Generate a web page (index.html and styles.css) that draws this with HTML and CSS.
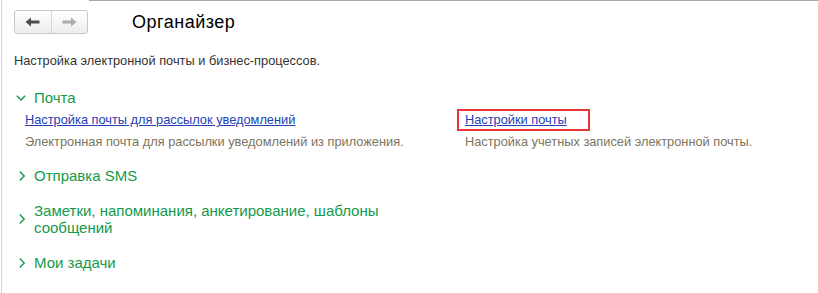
FILE: index.html
```html
<!DOCTYPE html>
<html lang="ru">
<head>
<meta charset="utf-8">
<link rel="stylesheet" href="styles.css">
</head>
<body>
<div class="frame">
  <header class="header">
    <div class="nav">
      <button class="nav-btn"><svg width="15" height="10" viewBox="0 0 15 10"><path d="M0.5 5 L6 0.5 V3.5 H14.5 V6.5 H6 V9.5 Z" fill="#4d4d4d"/></svg></button>
      <button class="nav-btn"><svg width="15" height="10" viewBox="0 0 15 10"><path d="M14.5 5 L9 0.5 V3.5 H0.5 V6.5 H9 V9.5 Z" fill="#ababab"/></svg></button>
    </div>
    <h1 class="title">Органайзер</h1>
  </header>
  <p class="intro">Настройка электронной почты и бизнес-процессов.</p>

  <section class="group open">
    <div class="group-head">
      <svg class="chev" width="10" height="10" viewBox="0 0 10 10"><path d="M0.8 2.8 L5 7 L9.2 2.8" fill="none" stroke="#13994a" stroke-width="1.4"/></svg>
      <span class="group-title">Почта</span>
    </div>
    <div class="items">
      <div class="item">
        <a class="link" href="#">Настройка почты для рассылок уведомлений</a>
        <div class="note">Электронная почта для рассылки уведомлений из приложения.</div>
      </div>
      <div class="item">
        <a class="link boxed" href="#">Настройки почты</a>
        <div class="note">Настройка учетных записей электронной почты.</div>
      </div>
    </div>
  </section>

  <section class="group">
    <div class="group-head">
      <svg class="chev" width="10" height="10" viewBox="0 0 10 10"><path d="M3.8 0.6 L8.2 5 L3.8 9.4" fill="none" stroke="#13994a" stroke-width="1.4"/></svg>
      <span class="group-title">Отправка SMS</span>
    </div>
  </section>

  <section class="group">
    <div class="group-head">
      <svg class="chev" width="10" height="10" viewBox="0 0 10 10"><path d="M3.8 0.6 L8.2 5 L3.8 9.4" fill="none" stroke="#13994a" stroke-width="1.4"/></svg>
      <span class="group-title">Заметки, напоминания, анкетирование, шаблоны<br>сообщений</span>
    </div>
  </section>

  <section class="group">
    <div class="group-head">
      <svg class="chev" width="10" height="10" viewBox="0 0 10 10"><path d="M3.8 0.6 L8.2 5 L3.8 9.4" fill="none" stroke="#13994a" stroke-width="1.4"/></svg>
      <span class="group-title">Мои задачи</span>
    </div>
  </section>
</div>
</body>
</html>
```
FILE: styles.css
```css
html, body {
  margin: 0;
  padding: 0;
  background: #fff;
}
body {
  font-family: "Liberation Sans", Arial, sans-serif;
  width: 818px;
  height: 293px;
  overflow: hidden;
}
.frame {
  position: relative;
  height: 293px;
  box-sizing: border-box;
  margin-left: 1px;
  border-left: 1px solid #eed88c;
  padding: 0 0 0 12px;
}
.frame::before {
  content: "";
  position: absolute;
  top: 0;
  left: 87px;
  right: 0;
  height: 1px;
  background: #a8a8a8;
}
.header {
  display: flex;
  align-items: center;
  padding-top: 10px;
  height: 24px;
}
.nav {
  display: flex;
  width: 74px;
  height: 24px;
  box-sizing: border-box;
  border: 1px solid #c8c8c8;
  border-radius: 3px;
  background: linear-gradient(#ffffff, #ededed);
  overflow: hidden;
}
.nav-btn {
  flex: 1;
  border: 0;
  padding: 0;
  margin: 0;
  background: transparent;
  display: flex;
  align-items: center;
  justify-content: center;
}
.nav-btn + .nav-btn {
  border-left: 1px solid #d6d6d6;
}
.title {
  margin: 0 0 0 44px;
  font-weight: normal;
  font-size: 18px;
  letter-spacing: 0.5px;
  color: #000;
  line-height: 22px;
}
.intro {
  margin: 19px 0 0 0;
  font-size: 12.8px;
  line-height: 15px;
  color: #333;
}
.group {
  margin-top: 18px;
}
.group.open {
  margin-top: 21px;
}
.group-head {
  display: flex;
  align-items: center;
  padding-left: 2px;
}
.chev {
  flex: none;
  margin-right: 8px;
}
.group-title {
  font-size: 15px;
  line-height: 17px;
  color: #13994a;
}
.items {
  display: grid;
  grid-template-columns: 440px 1fr;
  padding-left: 11px;
  margin-top: 6px;
}
.item {
  display: flex;
  flex-direction: column;
  align-items: flex-start;
}
.link {
  font-size: 12.8px;
  line-height: 15px;
  color: #2241b4;
  text-decoration: underline;
}
.boxed {
  position: relative;
}
.boxed::after {
  content: "";
  position: absolute;
  top: -3px;
  bottom: -4px;
  left: -8px;
  right: -23px;
  border: 2px solid #e8363b;
}
.note {
  margin-top: 7px;
  font-size: 12.8px;
  line-height: 15px;
  color: #7d7460;
}
```
